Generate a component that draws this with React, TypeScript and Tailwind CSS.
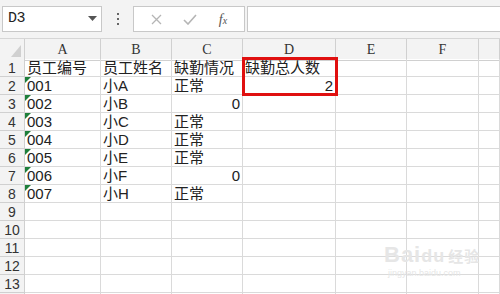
const cols = ['A', 'B', 'C', 'D', 'E', 'F', '']

type Cell = { text?: string; right?: boolean; flag?: boolean }

const rows: Cell[][] = [
  [{ text: '员工编号' }, { text: '员工姓名' }, { text: '缺勤情况' }, { text: '缺勤总人数' }],
  [{ text: '001', flag: true }, { text: '小A' }, { text: '正常' }, { text: '2', right: true }],
  [{ text: '002', flag: true }, { text: '小B' }, { text: '0', right: true }, {}],
  [{ text: '003', flag: true }, { text: '小C' }, { text: '正常' }, {}],
  [{ text: '004', flag: true }, { text: '小D' }, { text: '正常' }, {}],
  [{ text: '005', flag: true }, { text: '小E' }, { text: '正常' }, {}],
  [{ text: '006', flag: true }, { text: '小F' }, { text: '0', right: true }, {}],
  [{ text: '007', flag: true }, { text: '小H' }, { text: '正常' }, {}],
  [], [], [], [], [], [],
]

const gridCols = 'grid grid-cols-[25px_76px_71px_71px_93px_71px_72px_1fr]'
const font = { fontFamily: '"Liberation Sans", "Noto Sans CJK SC", sans-serif' }

export default function App() {
  return (
    <div className="w-[500px] h-[294px] overflow-hidden bg-white text-[#222]" style={font}>
      {/* formula bar */}
      <div className="h-[38px] bg-[#f3f3f3] flex items-center pl-[2px]">
        <div className="w-[100px] h-[26px] bg-white border border-[#c8c8c8] flex items-center justify-between pl-[5px] pr-[4px]">
          <span className="text-[15px] font-['Liberation_Mono'] tracking-[-0.5px]">D3</span>
          <svg width="9" height="6" viewBox="0 0 9 6"><path d="M0 0h9L4.5 5z" fill="#555" /></svg>
        </div>
        <div className="w-[31px] flex flex-col items-center gap-[3px]">
          <span className="w-[2px] h-[2px] bg-[#666]" />
          <span className="w-[2px] h-[2px] bg-[#666]" />
          <span className="w-[2px] h-[2px] bg-[#666]" />
        </div>
        <div className="w-[112px] h-[26px] bg-white border border-[#c8c8c8] flex items-center justify-around px-[6px]">
          <svg width="11" height="11" viewBox="0 0 11 11"><path d="M1 1l9 9M10 1l-9 9" stroke="#b5b5b5" strokeWidth="1.3" /></svg>
          <svg width="14" height="11" viewBox="0 0 14 11"><path d="M1 6l4 4 8-9" stroke="#b5b5b5" strokeWidth="1.6" fill="none" /></svg>
          <span className="text-[14px] italic text-[#555] font-['Liberation_Serif']">f<span className="text-[10px]">x</span></span>
        </div>
        <div className="flex-1 h-[26px] ml-[2px] bg-white border border-[#c8c8c8] border-r-0" />
      </div>

      <div className="relative">
        {/* column headers */}
        <div className={`${gridCols} h-[21px] bg-[#f3f3f3] border-t border-[#d6d6d6]`}>
          <div className="border-r border-b border-[#d0d0d0] flex items-end justify-end pr-[3px] pb-[3px]">
            <svg width="10" height="12" viewBox="0 0 10 12"><path d="M10 0v12H0z" fill="#d0d0d0" /></svg>
          </div>
          {cols.map((c, i) => (
            <div key={i} className="border-r border-b border-[#d0d0d0] flex items-center justify-center text-[14px] text-[#333] font-['Liberation_Serif']">
              {c}
            </div>
          ))}
        </div>

        {/* rows */}
        {rows.map((r, ri) => (
          <div key={ri} className={`${gridCols} h-[18px]`}>
            <div className="bg-[#f3f3f3] border-r border-b border-[#d0d0d0] flex items-center justify-center text-[14px] text-[#333] leading-none">
              {ri + 1}
            </div>
            {cols.map((_, ci) => {
              const cell = r[ci] || {}
              return (
                <div
                  key={ci}
                  className={`relative border-r border-b border-[#dadada] flex items-center px-[2px] text-[15px] leading-none whitespace-nowrap ${cell.right ? 'justify-end' : ''}`}
                >
                  {cell.flag && (
                    <svg className="absolute left-0 top-0" width="6" height="6" viewBox="0 0 6 6"><path d="M0 0h6L0 6z" fill="#1e7f3a" /></svg>
                  )}
                  {cell.text}
                </div>
              )
            })}
          </div>
        ))}

        {/* selection box around D1:D2 */}
        <div className="absolute left-[242px] top-[19px] w-[96px] h-[39px] border-[3px] border-[#e01010]" />

        {/* watermark */}
        <div className="absolute left-[384px] top-[206px] text-[#e6e6e6] leading-none">
          <div className="text-[22px] font-bold tracking-[1px]">Bai<span className="text-[18px]">du</span><span className="text-[15px] ml-[3px]">经验</span></div>
          <div className="text-[9px] ml-[4px] mt-[3px]">jingyan.baidu.com</div>
        </div>
      </div>
    </div>
  )
}
